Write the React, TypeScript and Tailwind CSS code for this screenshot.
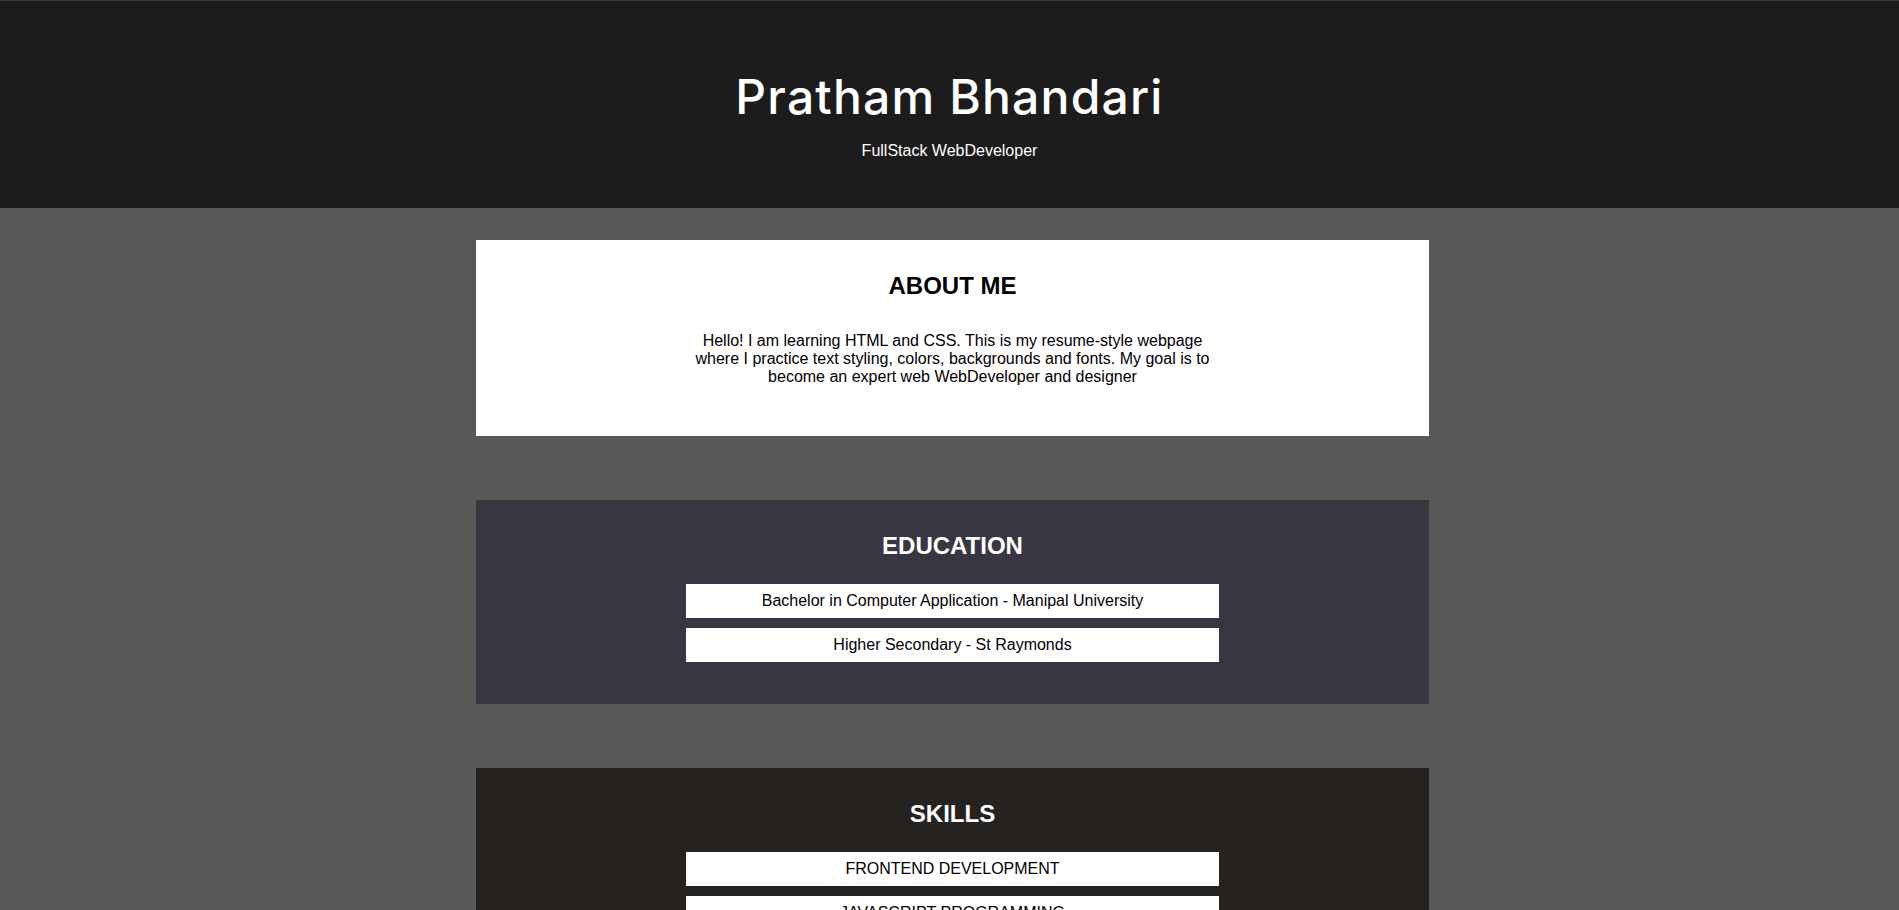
export default function App() {
  const education = [
    "Bachelor in Computer Application - Manipal University",
    "Higher Secondary - St Raymonds",
  ];
  const skills = [
    "FRONTEND DEVELOPMENT",
    "JAVASCRIPT PROGRAMMING",
    "RESPONSIVE WEB DESIGN",
  ];

  return (
    <div className="min-h-screen bg-[#585858] font-['Liberation_Sans',Arial,sans-serif]">
      {/* Header */}
      <header className="h-[208px] bg-[#1c1c1c] border-t border-[#3a3a3a] flex flex-col items-center text-white">
        <h1 className="mt-[67px] text-[48px] leading-[58px] font-['Inter',sans-serif] font-medium tracking-[1.2px]">
          Pratham Bhandari
        </h1>
        <p className="mt-[16px] text-base leading-[18px]">FullStack WebDeveloper</p>
      </header>

      <main className="pl-[6px] pt-8 pb-16">
        <div className="w-[953px] mx-auto flex flex-col gap-16">
          {/* About */}
          <section className="bg-white text-black text-center pt-8 pb-[50px]">
            <h2 className="text-2xl leading-[28px] font-bold">ABOUT ME</h2>
            <p className="mt-8 mx-auto max-w-[540px] text-base leading-[18px]">
              Hello! I am learning HTML and CSS. This is my resume-style webpage
              where I practice text styling, colors, backgrounds and fonts. My
              goal is to become an expert web WebDeveloper and designer
            </p>
          </section>

          {/* Education */}
          <section className="bg-[#383641] text-center pt-8 pb-[42px]">
            <h2 className="text-2xl leading-[28px] font-bold text-white">EDUCATION</h2>
            <ul className="mt-6 flex flex-col items-center gap-[10px]">
              {education.map((item) => (
                <li
                  key={item}
                  className="w-[533px] bg-white text-black text-base leading-[18px] py-2"
                >
                  {item}
                </li>
              ))}
            </ul>
          </section>

          {/* Skills */}
          <section className="bg-[#25221f] text-center pt-8 pb-[42px]">
            <h2 className="text-2xl leading-[28px] font-bold text-white">SKILLS</h2>
            <ul className="mt-6 flex flex-col items-center gap-[10px]">
              {skills.map((item) => (
                <li
                  key={item}
                  className="w-[533px] bg-white text-black text-base leading-[18px] py-2"
                >
                  {item}
                </li>
              ))}
            </ul>
          </section>
        </div>
      </main>
    </div>
  );
}
